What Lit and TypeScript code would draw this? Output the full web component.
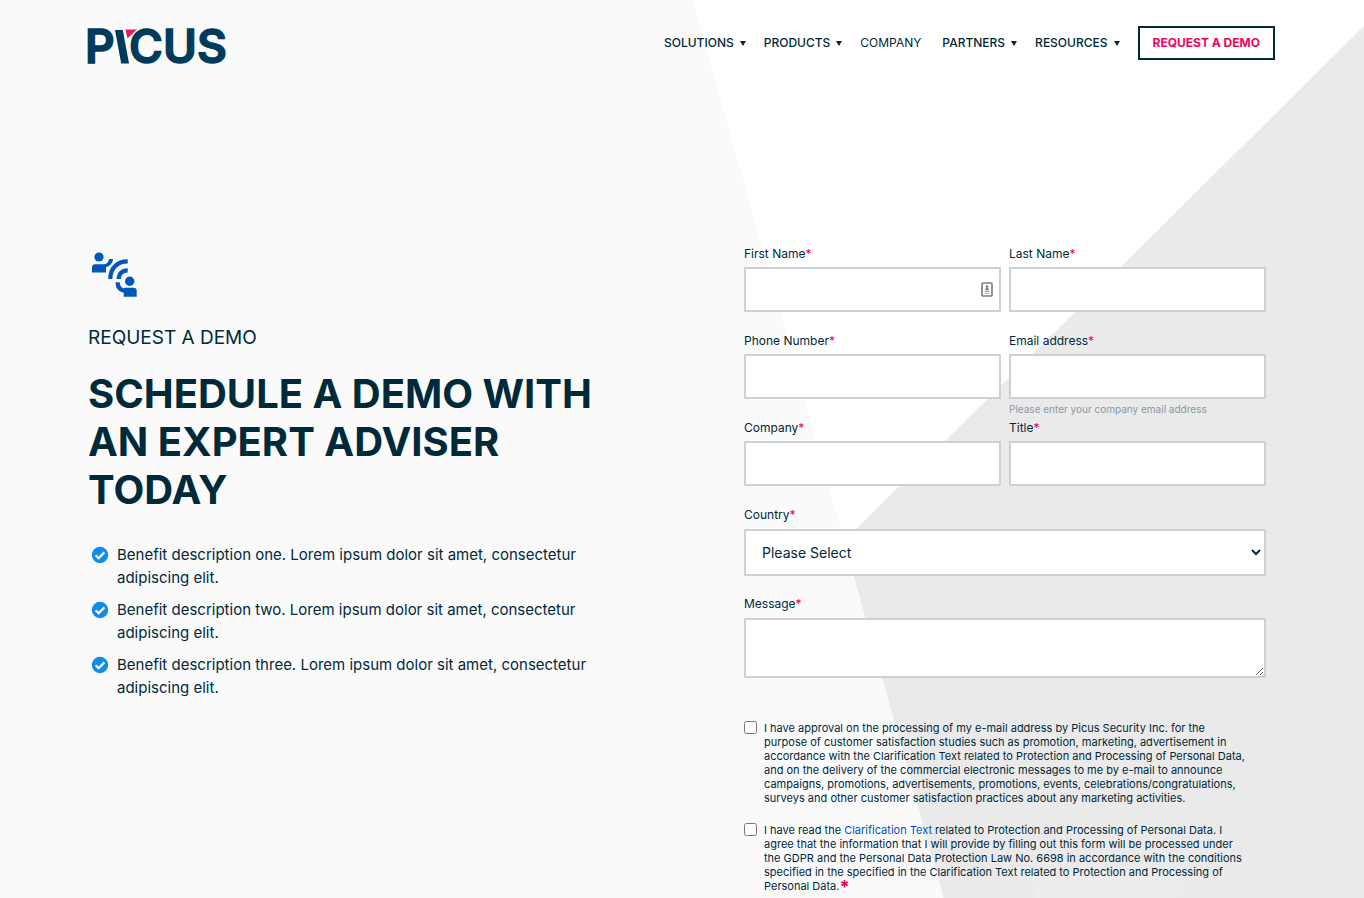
import { LitElement, html, css, svg } from "lit";
import { customElement } from "lit/decorators.js";

const NAV = [
  { label: "Solutions", menu: true },
  { label: "Products", menu: true },
  { label: "Company", menu: false },
  { label: "Partners", menu: true },
  { label: "Resources", menu: true },
];

const BENEFITS = [
  "Benefit description one. Lorem ipsum dolor sit amet, consectetur adipiscing elit.",
  "Benefit description two. Lorem ipsum dolor sit amet, consectetur adipiscing elit.",
  "Benefit description three. Lorem ipsum dolor sit amet, consectetur adipiscing elit.",
];

@customElement("site-header")
export class SiteHeader extends LitElement {
  static styles = css`
    :host { display: block; }
    .bar { display: flex; justify-content: space-between; align-items: flex-start; padding: 16px 89px 0 84px; }
    .logo { display: block; height: 60px; }
    .right { display: flex; align-items: center; margin-top: 10px; }
    .menu { display: flex; list-style: none; margin: 0 18px 0 0; padding: 0; gap: 18px; }
    .link { display: flex; align-items: center; gap: 6px; color: #00293a; font-size: 12px; line-height: 16px; font-weight: 500; text-transform: uppercase; text-decoration: none; }
    .plain { font-weight: 400; padding-right: 3px; }
    .demo { display: block; border: 2px solid #00293a; background: #fff; color: #f0045b; font-size: 12px; line-height: 16px; font-weight: 700; padding: 7px 13px; text-transform: uppercase; text-decoration: none; }
  `;
  render() {
    return html`
      <header class="bar">
        <a class="logo" href="#" aria-label="Picus">
          <svg width="148" height="60" viewBox="-4 -10 148 60" font-family="Inter, sans-serif" font-size="46" font-weight="600" fill="#003b5c" stroke="#003b5c" stroke-width="1.400">
            <text x="-3" y="37">P</text>
            <path d="M27 4h7.800l6.200 33.500h-7.800z" stroke="none" />
            <path d="M37.500 3.500h11.500l-9.500 9z" fill="#e31b5f" stroke="none" />
            <text x="41" y="37">C</text>
            <text x="75" y="37">U</text>
            <text x="109" y="37">S</text>
          </svg>
        </a>
        <nav class="right" aria-label="Main">
          <ul class="menu">
            ${NAV.map(
              (n) => html`<li>
                <a class="link ${n.menu ? "" : "plain"}" href="#">${n.label}${n.menu
                  ? html`<svg width="6" height="5" viewBox="0 0 6 5" aria-hidden="true"><path d="M0 0h6L3 5z" fill="#00293a" /></svg>`
                  : ""}</a>
              </li>`
            )}
          </ul>
          <a class="demo" href="#">Request a demo</a>
        </nav>
      </header>
    `;
  }
}

@customElement("demo-pitch")
export class DemoPitch extends LitElement {
  static styles = css`
    :host { display: block; color: #00293a; }
    .icon { display: block; }
    .kicker { font-size: 19px; line-height: 28px; margin: 22px 0 0; text-transform: uppercase; }
    .title { font-size: 40px; line-height: 48px; font-weight: 700; margin: 18px 0 0; text-transform: uppercase; }
    .list { list-style: none; margin: 29px 0 0; padding: 0 0 0 3px; display: grid; gap: 9px; }
    .item { display: flex; gap: 8px; font-size: 15px; line-height: 23px; }
    .check { flex: none; margin-top: 3px; }
  `;
  render() {
    return html`
      <svg class="icon" width="52" height="52" viewBox="0 0 52 52" fill="#0057b8" aria-hidden="true">
        <circle cx="11" cy="7" r="4.600" />
        <path d="M4 22.600v-5.300q0-3 3-3h8.500q4.500 0 5.700-5.300h4q-.800 6-7.200 8.300v5.300z" />
        <g fill="none" stroke="#0057b8" stroke-width="4.200">
          <path d="M22.300 29C22.300 18.500 29 11.400 39.700 11.400" />
          <path d="M30.800 29C30.800 24 34 20.400 39.700 20.400" />
          <path d="M29.600 32.300C29.600 37.500 32 40.300 37.500 41" />
        </g>
        <circle cx="41.700" cy="31.300" r="4.700" />
        <path d="M35.700 46.800v-9h9.800q3.200 0 3.200 3v6z" />
      </svg>
      <p class="kicker">Request a demo</p>
      <h1 class="title">Schedule a demo with an expert adviser today</h1>
      <ul class="list">
        ${BENEFITS.map(
          (b) => html`<li class="item">
            <svg class="check" width="18" height="18" viewBox="0 0 18 18" aria-hidden="true">
              <circle cx="9" cy="9" r="8.200" fill="#148be6" />
              <path d="M4.600 9.200l3 3 5.800-5.800" fill="none" stroke="#fff" stroke-width="2.200" />
            </svg>
            <span>${b}</span>
          </li>`
        )}
      </ul>
    `;
  }
}

@customElement("demo-form")
export class DemoForm extends LitElement {
  static styles = css`
    :host { display: block; color: #00293a; }
    .form { display: grid; grid-template-columns: 1fr 1fr; column-gap: 8px; font-size: 12px; }
    .field { display: flex; flex-direction: column; height: 87px; }
    .wide { grid-column: 1 / -1; height: auto; }
    .label { line-height: 16px; margin-bottom: 5px; }
    .wide .label { margin-bottom: 6px; }
    .req { color: #e6004e; }
    .control { box-sizing: border-box; width: 100%; height: 45px; margin: 0; border: 2px solid #cad1d9; border-radius: 1px; background: #fff; color: #00293a; font-family: inherit; font-size: 14px; padding: 0 16px; }
    .select { height: 47px; padding: 0 0 0 12px; }
    .area { display: block; height: 60px; }
    .box { display: grid; align-items: center; }
    .box > * { grid-area: 1 / 1; }
    .card { justify-self: end; margin-right: 8px; }
    .hint { font-size: 10px; line-height: 14px; margin-top: 3px; color: #8a98a3; }
    .message { margin-top: 20px; }
    .consents { grid-column: 1 / -1; display: grid; gap: 18px; margin-top: 43px; font-size: 11px; }
    .consent { display: flex; align-items: flex-start; gap: 7px; line-height: 14px; }
    .terms-text { max-width: 484px; }
    .tick { flex: none; width: 13px; height: 13px; margin: 0; }
    .terms { color: #0050c8; text-decoration: none; }
    .star { color: #e6004e; font-size: 18px; line-height: 10px; font-weight: 700; vertical-align: middle; }
  `;
  private field(id: string, label: string, extra: unknown = "", type = "text") {
    return html`<div class="field">
      <label class="label" for=${id}>${label}<span class="req">*</span></label>
      <div class="box"><input class="control" id=${id} type=${type} required />
        ${id === "first" ? svg`<svg class="card" width="12" height="15" viewBox="0 0 12 15" aria-hidden="true"><rect x="1" y="1" width="10" height="13" rx="1" fill="#fff" stroke="#808080" stroke-width="1.700" /><circle cx="6" cy="4.600" r="1.300" fill="#777" /><path d="M4 8.200q0-2.200 2-2.200t2 2.200z" fill="#777" /><path d="M3.500 9.500h5M3.500 11.300h5" stroke="#aaa" /></svg>` : ""}
      </div>
      ${extra}
    </div>`;
  }
  render() {
    return html`
      <form class="form">
        ${this.field("first", "First Name")} ${this.field("last", "Last Name")}
        ${this.field("phone", "Phone Number", "", "tel")}
        ${this.field("email", "Email address", html`<span class="hint">Please enter your company email address</span>`, "email")}
        ${this.field("company", "Company")} ${this.field("title", "Title")}
        <div class="field wide">
          <label class="label" for="country">Country<span class="req">*</span></label>
          <select class="control select" id="country" required><option>Please Select</option></select>
        </div>
        <div class="field wide message">
          <label class="label" for="message">Message<span class="req">*</span></label>
          <textarea class="control area" id="message" required></textarea>
        </div>
        <div class="consents">
          <div class="consent">
            <input class="tick" type="checkbox" id="marketing" />
            <label class="terms-text" for="marketing">I have approval on the processing of my e-mail address by Picus Security Inc. for the purpose of customer satisfaction studies such as promotion, marketing, advertisement in accordance with the Clarification Text related to Protection and Processing of Personal Data, and on the delivery of the commercial electronic messages to me by e-mail to announce campaigns, promotions, advertisements, promotions, events, celebrations/congratulations, surveys and other customer satisfaction practices about any marketing activities.</label>
          </div>
          <div class="consent">
            <input class="tick" type="checkbox" id="privacy" required />
            <label class="terms-text" for="privacy">I have read the <a class="terms" href="#">Clarification Text</a> related to Protection and Processing of Personal Data. I agree that the information that I will provide by filling out this form will be processed under the GDPR and the Personal Data Protection Law No. 6698 in accordance with the conditions specified in the specified in the Clarification Text related to Protection and Processing of Personal Data.<span class="star">*</span></label>
          </div>
        </div>
      </form>
    `;
  }
}

@customElement("app-root")
export class AppRoot extends LitElement {
  static styles = css`
    :host { display: block; font-family: Inter, sans-serif; }
    .page { position: relative; min-height: 100vh; overflow: hidden; background: #fff; }
    .backdrop { position: absolute; top: 0; left: 0; width: 100%; }
    .content { position: relative; }
    .hero { display: grid; grid-template-columns: minmax(0, 520px) minmax(0, 522px); justify-content: space-between; align-items: start; padding: 170px 98px 0 88px; }
    .pitch { margin-top: 4px; }
  `;
  render() {
    return html`
      <div class="page">
        <svg class="backdrop" viewBox="0 0 1364 1100" aria-hidden="true">
          <defs>
            <linearGradient id="sheen" x1="0" y1="0" x2="1" y2="0">
              <stop offset="0" stop-color="#ededed" />
              <stop offset="1" stop-color="#eaeaea" />
            </linearGradient>
          </defs>
          <path d="M0 0H693L1000 1100H0z" fill="#fafafa" />
          <path d="M1364 26L844 541L1000 1100H1364z" fill="#eaeaea" />
          <path d="M1029 872L1092 1100H1300V872z" fill="url(#sheen)" />
        </svg>
        <div class="content">
          <site-header></site-header>
          <main class="hero">
            <demo-pitch class="pitch"></demo-pitch>
            <demo-form></demo-form>
          </main>
        </div>
      </div>
    `;
  }
}
